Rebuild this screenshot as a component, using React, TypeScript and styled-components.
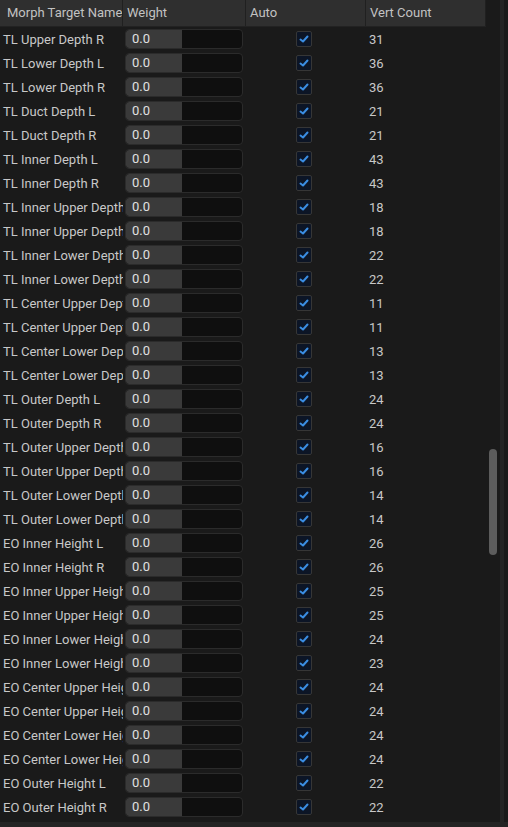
import React from 'react'
import styled, { createGlobalStyle } from 'styled-components'

const GlobalStyle = createGlobalStyle`
  html, body {
    margin: 0;
    padding: 0;
    background: #1a1a1a;
  }
  body {
    font-family: Roboto, 'Noto Sans', 'Liberation Sans', sans-serif;
    font-size: 13px;
  }
`

const COLUMNS = '123px 123px 120px 120px'

interface Morph {
  name: string
  verts: number
}

const morphs: Morph[] = [
  { name: 'TL Upper Depth R', verts: 31 },
  { name: 'TL Lower Depth L', verts: 36 },
  { name: 'TL Lower Depth R', verts: 36 },
  { name: 'TL Duct Depth L', verts: 21 },
  { name: 'TL Duct Depth R', verts: 21 },
  { name: 'TL Inner Depth L', verts: 43 },
  { name: 'TL Inner Depth R', verts: 43 },
  { name: 'TL Inner Upper Depth L', verts: 18 },
  { name: 'TL Inner Upper Depth R', verts: 18 },
  { name: 'TL Inner Lower Depth L', verts: 22 },
  { name: 'TL Inner Lower Depth R', verts: 22 },
  { name: 'TL Center Upper Depth L', verts: 11 },
  { name: 'TL Center Upper Depth R', verts: 11 },
  { name: 'TL Center Lower Depth L', verts: 13 },
  { name: 'TL Center Lower Depth R', verts: 13 },
  { name: 'TL Outer Depth L', verts: 24 },
  { name: 'TL Outer Depth R', verts: 24 },
  { name: 'TL Outer Upper Depth L', verts: 16 },
  { name: 'TL Outer Upper Depth R', verts: 16 },
  { name: 'TL Outer Lower Depth L', verts: 14 },
  { name: 'TL Outer Lower Depth R', verts: 14 },
  { name: 'EO Inner Height L', verts: 26 },
  { name: 'EO Inner Height R', verts: 26 },
  { name: 'EO Inner Upper Height L', verts: 25 },
  { name: 'EO Inner Upper Height R', verts: 25 },
  { name: 'EO Inner Lower Height L', verts: 24 },
  { name: 'EO Inner Lower Height R', verts: 23 },
  { name: 'EO Center Upper Height L', verts: 24 },
  { name: 'EO Center Upper Height R', verts: 24 },
  { name: 'EO Center Lower Height L', verts: 24 },
  { name: 'EO Center Lower Height R', verts: 24 },
  { name: 'EO Outer Height L', verts: 22 },
  { name: 'EO Outer Height R', verts: 22 },
]

const Frame = styled.div`
  width: 508px;
  height: 827px;
  display: flex;
  flex-direction: column;
  overflow: hidden;
  background: #1a1a1a;
`
const Body = styled.div`
  flex: 1;
  display: flex;
  min-height: 0;
`
const Table = styled.div`
  width: 486px;
  display: flex;
  flex-direction: column;
`
const HeaderRow = styled.div`
  display: grid;
  grid-template-columns: ${COLUMNS};
  height: 27px;
  background: #2f2f2f;
  border-bottom: 1px solid #222222;
  box-sizing: border-box;
`
const HeaderCell = styled.div<{ $pad?: number }>`
  padding-left: ${(p) => p.$pad ?? 4}px;
  line-height: 26px;
  color: #c2c2c2;
  white-space: nowrap;
  overflow: hidden;
  border-right: 1px solid #202020;
`
const Row = styled.div`
  display: grid;
  grid-template-columns: ${COLUMNS};
  height: 24px;
  align-items: center;
`
const NameCell = styled.div`
  padding-left: 3px;
  color: #c8c8c8;
  white-space: nowrap;
  overflow: hidden;
`
const WeightBox = styled.div`
  margin-left: 2px;
  width: 118px;
  height: 20px;
  box-sizing: border-box;
  background: #0f0f0f;
  border: 1px solid #2b2b2b;
  border-radius: 4px;
  display: flex;
  overflow: hidden;
`
const WeightFill = styled.div`
  width: 56px;
  background: #3a3a3a;
  border-radius: 3px 0 0 3px;
  color: #e0e0e0;
  padding-left: 6px;
  line-height: 18px;
  box-sizing: border-box;
`
const AutoCell = styled.div`
  display: flex;
  justify-content: center;
  padding-right: 4px;
`
const CheckBox = styled.div`
  width: 16px;
  height: 16px;
  box-sizing: border-box;
  background: #0c1526;
  border: 1px solid #363636;
  border-radius: 2px;
  display: flex;
  align-items: center;
  justify-content: center;
`
const CountCell = styled.div`
  padding-left: 3px;
  color: #c8c8c8;
`
const ScrollTrack = styled.div`
  width: 14px;
  padding-top: 449px;
  box-sizing: border-box;
  display: flex;
  justify-content: center;
`
const ScrollThumb = styled.div`
  width: 8px;
  height: 106px;
  border-radius: 4px;
  background: #5c5c5c;
`
const EdgeStrip = styled.div`
  width: 4px;
  background: #242424;
`
const BottomStrip = styled.div`
  height: 5px;
  background: #242424;
`

const Check = () => (
  <svg width="12" height="12" viewBox="0 0 12 12">
    <polyline
      points="2.5,6.5 5,8.5 9.5,3.5"
      fill="none"
      stroke="#3a8de2"
      strokeWidth="2"
      strokeLinecap="round"
      strokeLinejoin="round"
    />
  </svg>
)

export default function App() {
  return (
    <>
      <GlobalStyle />
      <Frame>
        <Body>
          <Table>
            <HeaderRow>
              <HeaderCell $pad={7}>Morph Target Name</HeaderCell>
              <HeaderCell>Weight</HeaderCell>
              <HeaderCell>Auto</HeaderCell>
              <HeaderCell>Vert Count</HeaderCell>
            </HeaderRow>
            {morphs.map((m, i) => (
              <Row key={i}>
                <NameCell>{m.name}</NameCell>
                <WeightBox>
                  <WeightFill>0.0</WeightFill>
                </WeightBox>
                <AutoCell>
                  <CheckBox>
                    <Check />
                  </CheckBox>
                </AutoCell>
                <CountCell>{m.verts}</CountCell>
              </Row>
            ))}
          </Table>
          <ScrollTrack>
            <ScrollThumb />
          </ScrollTrack>
          <EdgeStrip />
        </Body>
        <BottomStrip />
      </Frame>
    </>
  )
}
